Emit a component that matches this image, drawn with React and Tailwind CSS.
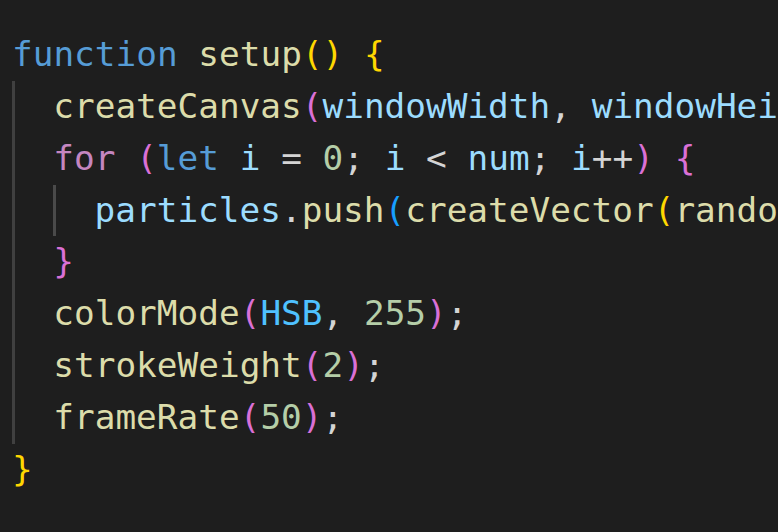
import React from 'react';

const c = {
  kw: 'text-[#569cd6]',
  fn: 'text-[#dcdcaa]',
  v: 'text-[#9cdcfe]',
  p: 'text-[#d4d4d4]',
  num: 'text-[#b5cea8]',
  ctl: 'text-[#c586c0]',
  cst: 'text-[#4fc1ff]',
  b1: 'text-[#ffd700]',
  b2: 'text-[#da70d6]',
  b3: 'text-[#179fff]',
};

const Line = ({ children }) => (
  <div className="h-[51.8px] leading-[51.8px] whitespace-pre">{children}</div>
);

const Guide = ({ tone, children }) => (
  <div className={`border-l-[3px] pl-[38.3px] ${tone}`}>{children}</div>
);

export default function App() {
  return (
    <div
      className="w-[778px] h-[532px] bg-[#1e1e1e] overflow-hidden pt-[29.2px] pl-[12px] text-[34.4px]"
      style={{ fontFamily: '"DejaVu Sans Mono", monospace' }}
    >
      <Line>
        <span className={c.kw}>function</span> <span className={c.fn}>setup</span>
        <span className={c.b1}>()</span> <span className={c.b1}>{'{'}</span>
      </Line>
      <Guide tone="border-[#404040]">
        <Line>
          <span className={c.fn}>createCanvas</span>
          <span className={c.b2}>(</span>
          <span className={c.v}>windowWidth</span>
          <span className={c.p}>, </span>
          <span className={c.v}>windowHeight</span>
          <span className={c.b2}>)</span>
          <span className={c.p}>;</span>
        </Line>
        <Line>
          <span className={c.ctl}>for</span> <span className={c.b2}>(</span>
          <span className={c.kw}>let</span> <span className={c.v}>i</span>
          <span className={c.p}> = </span>
          <span className={c.num}>0</span>
          <span className={c.p}>; </span>
          <span className={c.v}>i</span>
          <span className={c.p}> &lt; </span>
          <span className={c.v}>num</span>
          <span className={c.p}>; </span>
          <span className={c.v}>i</span>
          <span className={c.p}>++</span>
          <span className={c.b2}>)</span> <span className={c.b2}>{'{'}</span>
        </Line>
        <Guide tone="border-[#4a4a4a]">
          <Line>
            <span className={c.v}>particles</span>
            <span className={c.p}>.</span>
            <span className={c.fn}>push</span>
            <span className={c.b3}>(</span>
            <span className={c.fn}>createVector</span>
            <span className={c.b1}>(</span>
            <span className={c.fn}>random</span>
            <span className={c.b2}>(</span>
            <span className={c.v}>width</span>
            <span className={c.b2}>)</span>
          </Line>
        </Guide>
        <Line>
          <span className={c.b2}>{'}'}</span>
        </Line>
        <Line>
          <span className={c.fn}>colorMode</span>
          <span className={c.b2}>(</span>
          <span className={c.cst}>HSB</span>
          <span className={c.p}>, </span>
          <span className={c.num}>255</span>
          <span className={c.b2}>)</span>
          <span className={c.p}>;</span>
        </Line>
        <Line>
          <span className={c.fn}>strokeWeight</span>
          <span className={c.b2}>(</span>
          <span className={c.num}>2</span>
          <span className={c.b2}>)</span>
          <span className={c.p}>;</span>
        </Line>
        <Line>
          <span className={c.fn}>frameRate</span>
          <span className={c.b2}>(</span>
          <span className={c.num}>50</span>
          <span className={c.b2}>)</span>
          <span className={c.p}>;</span>
        </Line>
      </Guide>
      <Line>
        <span className={c.b1}>{'}'}</span>
      </Line>
    </div>
  );
}
